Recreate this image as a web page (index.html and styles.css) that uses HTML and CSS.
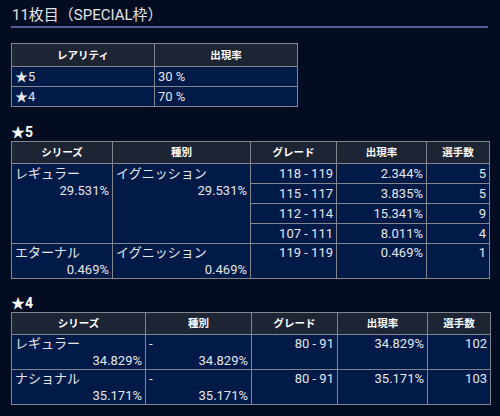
FILE: index.html
```html
<!DOCTYPE html>
<html lang="ja">
<head>
<meta charset="utf-8">
<link rel="stylesheet" href="styles.css">
</head>
<body>
<div class="page">
  <h2 class="title">11枚目（SPECIAL枠）</h2>

  <table class="tbl tbl-rarity">
    <colgroup><col class="c-half"><col class="c-half"></colgroup>
    <thead>
      <tr><th>レアリティ</th><th>出現率</th></tr>
    </thead>
    <tbody>
      <tr class="r1"><td>★5</td><td>30 %</td></tr>
      <tr class="r1"><td>★4</td><td>70 %</td></tr>
    </tbody>
  </table>

  <h3 class="rank">★5</h3>
  <table class="tbl tbl-detail">
    <colgroup>
      <col class="w101"><col class="w138"><col class="w86"><col class="w90"><col class="w62">
    </colgroup>
    <thead>
      <tr><th>シリーズ</th><th>種別</th><th>グレード</th><th>出現率</th><th>選手数</th></tr>
    </thead>
    <tbody>
      <tr class="r1">
        <td rowspan="4"><div>レギュラー</div><div class="num">29.531%</div></td>
        <td rowspan="4"><div>イグニッション</div><div class="num">29.531%</div></td>
        <td class="num">118 - 119</td><td class="num">2.344%</td><td class="num">5</td>
      </tr>
      <tr class="r1"><td class="num">115 - 117</td><td class="num">3.835%</td><td class="num">5</td></tr>
      <tr class="r1"><td class="num">112 - 114</td><td class="num">15.341%</td><td class="num">9</td></tr>
      <tr class="r1"><td class="num">107 - 111</td><td class="num">8.011%</td><td class="num">4</td></tr>
      <tr class="r2">
        <td><div>エターナル</div><div class="num">0.469%</div></td>
        <td><div>イグニッション</div><div class="num">0.469%</div></td>
        <td class="num">119 - 119</td><td class="num">0.469%</td><td class="num">1</td>
      </tr>
    </tbody>
  </table>

  <h3 class="rank rank-4">★4</h3>
  <table class="tbl tbl-detail">
    <colgroup>
      <col class="w134"><col class="w106"><col class="w85"><col class="w90"><col class="w62">
    </colgroup>
    <thead>
      <tr><th>シリーズ</th><th>種別</th><th>グレード</th><th>出現率</th><th>選手数</th></tr>
    </thead>
    <tbody>
      <tr class="r2">
        <td><div>レギュラー</div><div class="num">34.829%</div></td>
        <td><div>-</div><div class="num">34.829%</div></td>
        <td class="num">80 - 91</td><td class="num">34.829%</td><td class="num">102</td>
      </tr>
      <tr class="r2">
        <td><div>ナショナル</div><div class="num">35.171%</div></td>
        <td><div>-</div><div class="num">35.171%</div></td>
        <td class="num">80 - 91</td><td class="num">35.171%</td><td class="num">103</td>
      </tr>
    </tbody>
  </table>
</div>
</body>
</html>
```

FILE: styles.css
```css
html, body {
  margin: 0;
  padding: 0;
  background: #030c21;
}
body {
  font-family: Roboto, "Noto Sans CJK JP", sans-serif;
  color: #e4e6ea;
  width: 500px;
  height: 416px;
  overflow: hidden;
}
.page {
  padding: 0 12px 0 11px;
}
.title {
  margin: 0;
  padding: 4px 0 0 1px;
  font-size: 15px;
  font-weight: normal;
  line-height: 22px;
  color: #e2e4e8;
  border-bottom: 2px solid #505f96;
}
.tbl {
  border-collapse: collapse;
  table-layout: fixed;
  font-size: 13px;
  line-height: 17px;
}
.tbl th, .tbl td {
  border: 1px solid #81868f;
  padding: 0 3px;
  vertical-align: top;
  overflow: hidden;
  white-space: nowrap;
}
.tbl th {
  background: #1d2434;
  color: #ffffff;
  font-size: 10.5px;
  font-weight: bold;
  text-align: center;
  line-height: 17px;
  padding: 2px 3px 2px;
}
.tbl td {
  background: #021a48;
  text-align: left;
}
.tbl .num {
  text-align: right;
}
.tbl .r1 td {
  padding-top: 1px;
  padding-bottom: 1px;
}
.tbl .r2 td {
  padding-top: 0;
  padding-bottom: 0;
}
.tbl-rarity {
  margin-top: 15px;
  width: 287px;
}
.tbl-rarity th {
  padding-top: 3px;
  padding-bottom: 2px;
}
.tbl-rarity .r1 td {
  padding-top: 1px;
  padding-bottom: 1px;
}
.c-half { width: 143px; }
.tbl-detail {
  width: 478px;
}
.w101 { width: 101px; }
.w138 { width: 138px; }
.w86 { width: 86px; }
.w90 { width: 90px; }
.w62 { width: 63px; }
.w134 { width: 134px; }
.w106 { width: 106px; }
.w85 { width: 86px; }
.rank {
  margin: 16px 0 0;
  font-size: 14px;
  font-weight: bold;
  line-height: 18px;
  color: #ffffff;
}
.rank-4 {
  margin-top: 15px;
}
```
